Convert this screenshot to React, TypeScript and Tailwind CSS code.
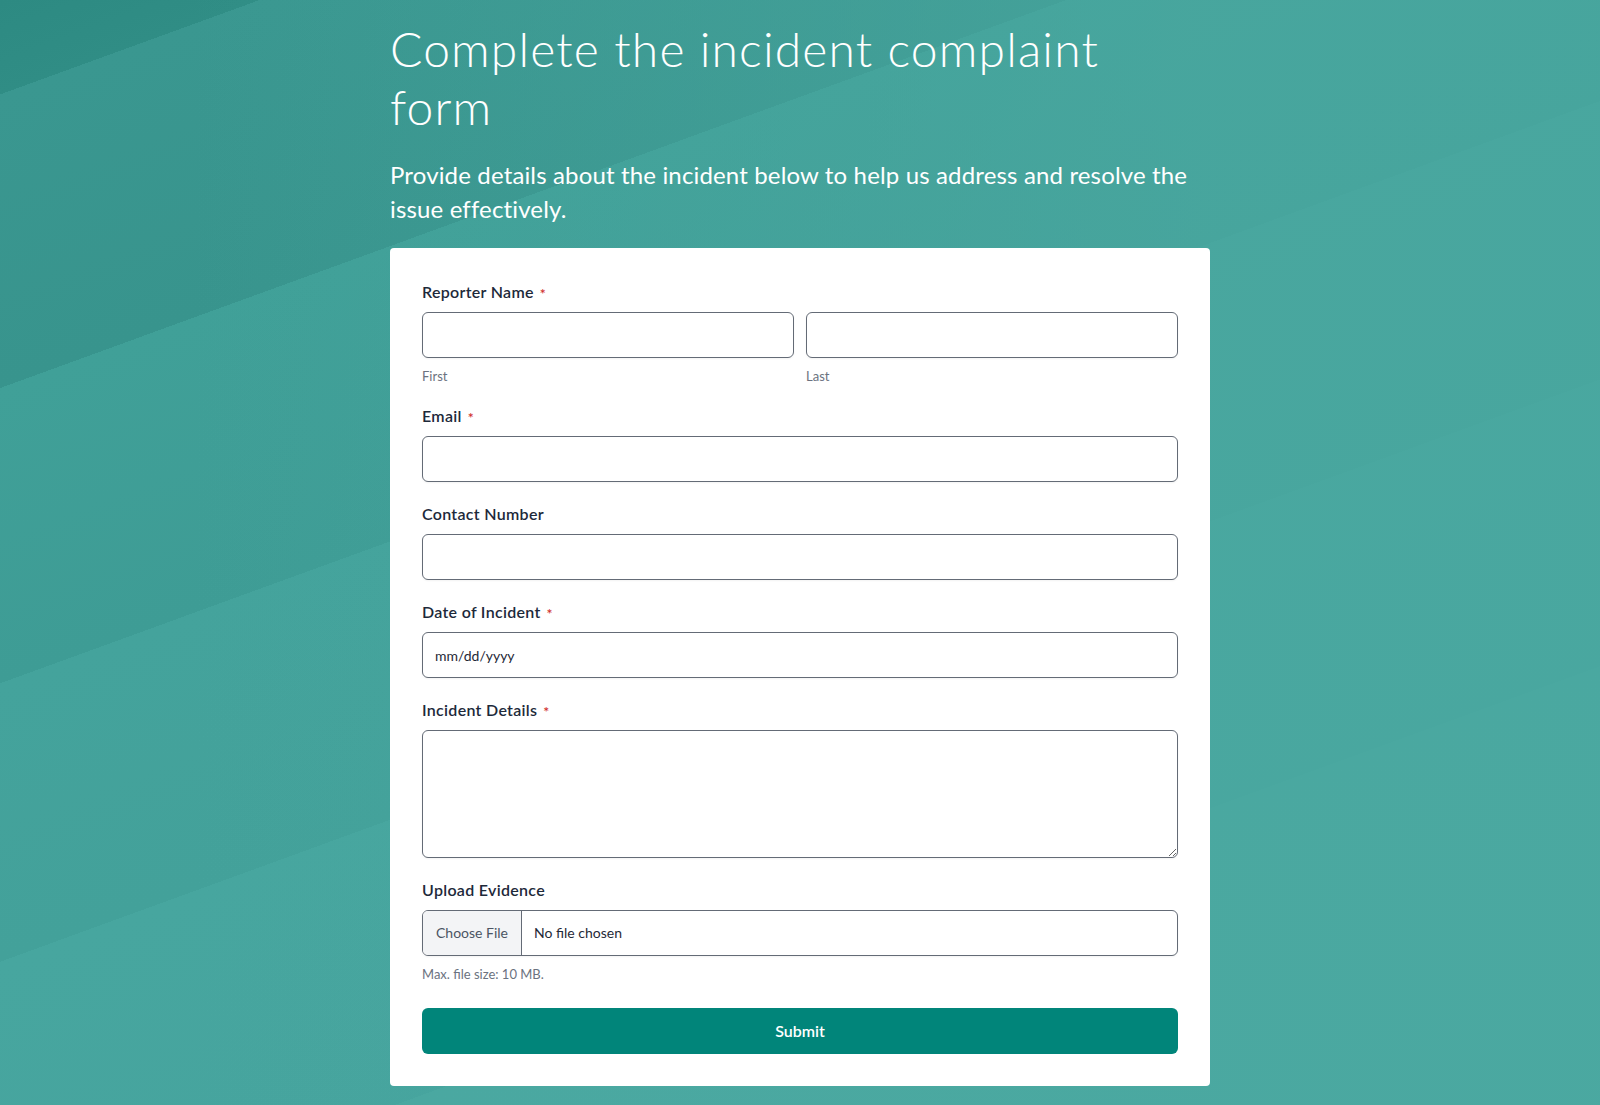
import type React from "react";

const font = "font-['Lato','Noto_Sans',sans-serif]";

interface FieldProps {
  label: string;
  required?: boolean;
  children: React.ReactNode;
}

const Field: React.FC<FieldProps> = ({ label, required, children }) => (
  <div className="flex flex-col">
    <label className="mb-2 flex h-6 items-center text-base font-semibold tracking-[0.3px] text-[#1d293a]">
      {label}
      {required && (
        <span className="ml-1.5 mt-1 text-[14px] leading-none text-[#d0312d]">*</span>
      )}
    </label>
    {children}
  </div>
);

const inputClass =
  "h-[46px] w-full rounded-[6px] border border-[#646b76] bg-white px-3 text-sm text-[#1f2937] shadow-xs outline-none placeholder:text-[#1f2937]";

const hintClass = "mt-2.5 text-[13px] leading-4 text-[#6b7280]";

export default function App() {
  return (
    <div
      className={`min-h-screen w-full ${font} bg-[linear-gradient(160deg,#2d8a82_0%,#308d85_5.6%,#3a9790_5.6%,#38948d_23%,#40a098_23%,#3e9c95_40.5%,#44a39c_40.5%,#43a19a_57%,#47a69f_57%,#46a49e_74%,#4aa8a1_74%,#4ca9a2_100%)]`}
    >
      <div className="min-h-screen w-full bg-[linear-gradient(to_right,rgba(74,168,160,0)_12%,rgba(74,168,160,0.75)_75%)]">
        <div className="mx-auto w-[820px] pt-5 pb-[18px]">
          <h1 className="max-w-[760px] text-[48px] leading-[58px] font-light tracking-[1.15px] text-white">
            Complete the incident complaint form
          </h1>
          <p className="mt-[22px] text-[24px] leading-[34px] tracking-[0.15px] text-white">
            Provide details about the incident below to help us address and
            resolve the issue effectively.
          </p>

          <form className="mt-[22px] flex flex-col gap-5 rounded-[4px] bg-white px-8 pt-8 pb-8">
            <Field label="Reporter Name" required>
              <div className="grid grid-cols-2 gap-3">
                <div className="flex flex-col">
                  <input type="text" className={inputClass} />
                  <span className={hintClass}>First</span>
                </div>
                <div className="flex flex-col">
                  <input type="text" className={inputClass} />
                  <span className={hintClass}>Last</span>
                </div>
              </div>
            </Field>

            <Field label="Email" required>
              <input type="email" className={inputClass} />
            </Field>

            <Field label="Contact Number">
              <input type="tel" className={inputClass} />
            </Field>

            <Field label="Date of Incident" required>
              <input type="text" placeholder="mm/dd/yyyy" className={inputClass} />
            </Field>

            <Field label="Incident Details" required>
              <textarea className="h-[128px] w-full rounded-[6px] border border-[#646b76] bg-white px-3 py-2 text-sm text-[#1f2937] shadow-xs outline-none" />
            </Field>

            <Field label="Upload Evidence">
              <div className="flex h-[46px] w-full overflow-hidden rounded-[6px] border border-[#646b76] bg-white shadow-xs">
                <span className="flex w-[99px] shrink-0 items-center justify-center border-r border-[#646b76] bg-[#f3f4f6] text-sm text-[#4b5563]">
                  Choose File
                </span>
                <span className="flex items-center px-3 text-sm text-[#1f2937]">
                  No file chosen
                </span>
              </div>
              <span className={hintClass}>Max. file size: 10 MB.</span>
            </Field>

            <button
              type="button"
              className="mt-1.5 h-[46px] w-full rounded-[6px] bg-[#01857a] text-base font-semibold text-white"
            >
              Submit
            </button>
          </form>
        </div>
      </div>
    </div>
  );
}
